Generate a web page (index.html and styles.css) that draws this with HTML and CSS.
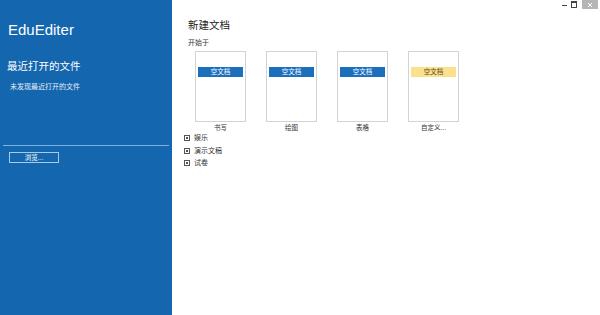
FILE: index.html
```html
<!DOCTYPE html>
<html lang="zh">
    <head>
        <meta charset="UTF-8" />
        <title>EduEditer</title>
        <link rel="stylesheet" href="styles.css">
    </head>
    <body>
        <!-- 왼쪽 사이드바 -->
        <div class="sidebar">
            <div class="app-title">EduEditer</div>
            <div class="recent-title">最近打开的文件</div>
            <div class="recent-empty">未发现最近打开的文件</div>
            <div class="sidebar-line"></div>
            <button class="browse">浏览...</button>
        </div>

        <!-- 메인 영역 -->
        <div class="main">
            <div class="main-title">新建文档</div>
            <div class="start-label">开始于</div>

            <div class="templates">
                <div class="template">
                    <div class="card"><div class="bar">空文档</div></div>
                    <div class="caption">书写</div>
                </div>
                <div class="template">
                    <div class="card"><div class="bar">空文档</div></div>
                    <div class="caption">绘图</div>
                </div>
                <div class="template">
                    <div class="card"><div class="bar">空文档</div></div>
                    <div class="caption">表格</div>
                </div>
                <div class="template">
                    <div class="card"><div class="bar custom">空文档</div></div>
                    <div class="caption">自定义...</div>
                </div>
            </div>

            <div class="groups">
                <div class="group"><span class="expander"></span>娱乐</div>
                <div class="group"><span class="expander"></span>演示文稿</div>
                <div class="group"><span class="expander"></span>试卷</div>
            </div>
        </div>

        <!-- 창 버튼 -->
        <div class="window-buttons">
            <span class="win-min"></span>
            <span class="win-restore"></span>
            <span class="win-close">
                <svg width="6" height="6" viewBox="0 0 6 6">
                    <path d="M1 1L5 5M5 1L1 5" stroke="#fff" stroke-width="1" />
                </svg>
            </span>
        </div>
    </body>
</html>
```

FILE: styles.css
```css
body {
    margin: 0;
    padding: 0;
    display: flex;
    height: 315px;
    background-color: #fff;
    font-family: "Liberation Sans", "Noto Sans CJK SC", sans-serif;
    overflow: hidden;
}

.sidebar {
    width: 172px;
    flex-shrink: 0;
    background-color: #1466ae;
    color: #fff;
    display: flex;
    flex-direction: column;
}

.app-title {
    font-size: 15px;
    line-height: 18px;
    margin: 21px 0 0 8px;
}

.recent-title {
    font-size: 10.5px;
    line-height: 14px;
    margin: 20px 0 0 7px;
}

.recent-empty {
    font-size: 7px;
    line-height: 10px;
    margin: 9px 0 0 10px;
    color: #e4eef8;
}

.sidebar-line {
    height: 1px;
    background-color: #7fb0de;
    margin: 53px 3px 0 3px;
}

.browse {
    width: 50px;
    height: 11px;
    margin: 6px 0 0 9px;
    padding: 0;
    background: transparent;
    border: 1px solid #a9c9e8;
    color: #fff;
    font-family: inherit;
    font-size: 6.5px;
    line-height: 9px;
}

.main {
    flex: 1;
    padding: 18px 0 0 16px;
    color: #333;
}

.main-title {
    font-size: 10.5px;
    line-height: 14px;
    color: #222;
}

.start-label {
    font-size: 7px;
    line-height: 10px;
    margin-top: 6px;
    color: #333;
}

.templates {
    display: flex;
    gap: 20px;
    margin: 3px 0 0 7px;
}

.template {
    width: 51px;
    display: flex;
    flex-direction: column;
    align-items: center;
}

.card {
    width: 51px;
    height: 71px;
    border: 1px solid #d3d3d3;
    padding-top: 15px;
    box-sizing: border-box;
}

.bar {
    height: 10px;
    margin: 0 2px;
    background-color: #1b6fbd;
    color: #fff;
    font-size: 6.5px;
    line-height: 10px;
    text-align: center;
}

.bar.custom {
    background-color: #fbe08d;
    color: #5a4a1a;
}

.caption {
    font-size: 6.5px;
    line-height: 9px;
    margin-top: 1px;
    color: #333;
}

.groups {
    margin: 0 0 0 -4px;
}

.group {
    display: flex;
    align-items: center;
    font-size: 7px;
    line-height: 12.5px;
    color: #333;
}

.expander {
    width: 4px;
    height: 4px;
    border: 1px solid #555;
    margin-right: 4px;
    position: relative;
}

.expander::after {
    content: "";
    position: absolute;
    left: 1px;
    top: 1px;
    width: 2px;
    height: 2px;
    background-color: #555;
}

.window-buttons {
    position: absolute;
    top: 0;
    right: 2px;
    display: flex;
    align-items: flex-start;
}

.win-min {
    width: 5px;
    height: 1px;
    background-color: #444;
    margin: 5px 4px 0 0;
}

.win-restore {
    width: 4px;
    height: 4px;
    border: 1px solid #444;
    border-top-width: 2px;
    margin: 1px 5px 0 0;
}

.win-close {
    width: 16px;
    height: 9px;
    background-color: #b5b5b5;
    display: flex;
    justify-content: center;
    align-items: center;
}
```
